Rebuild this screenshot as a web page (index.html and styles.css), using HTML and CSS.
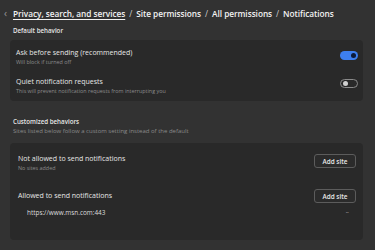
FILE: index.html
```html
<!DOCTYPE html>
<html>
<head>
<meta charset="utf-8">
<link rel="stylesheet" href="styles.css">
</head>
<body>
<div class="page">
  <div class="crumbs">
    <span class="back">‹</span>
    <span class="link">Privacy, search, and services</span>
    <span class="sep">/</span>
    <span>Site permissions</span>
    <span class="sep">/</span>
    <span>All permissions</span>
    <span class="sep">/</span>
    <span>Notifications</span>
  </div>

  <div class="section-title">Default behavior</div>
  <div class="card card-default">
    <div class="row">
      <div class="text">
        <div class="label">Ask before sending (recommended)</div>
        <div class="desc">Will block if turned off</div>
      </div>
      <span class="toggle on"><span class="knob"></span></span>
    </div>
    <div class="row">
      <div class="text">
        <div class="label">Quiet notification requests</div>
        <div class="desc">This will prevent notification requests from interrupting you</div>
      </div>
      <span class="toggle off"><span class="knob"></span></span>
    </div>
  </div>

  <div class="section-title custom">Customized behaviors</div>
  <div class="section-sub">Sites listed below follow a custom setting instead of the default</div>
  <div class="card card-custom">
    <div class="group">
      <div class="text">
        <div class="label">Not allowed to send notifications</div>
        <div class="desc">No sites added</div>
      </div>
      <button class="btn">Add site</button>
    </div>
    <div class="group second">
      <div class="text">
        <div class="label">Allowed to send notifications</div>
      </div>
      <button class="btn">Add site</button>
    </div>
    <div class="site">
      <span class="url">https://www.msn.com:443</span>
      <span class="more">···</span>
    </div>
  </div>
</div>
</body>
</html>
```

FILE: styles.css
```css
* { box-sizing: border-box; }
html, body { margin: 0; padding: 0; }
body {
  background: #323232;
  font-family: "Open Sans", "Noto Sans", sans-serif;
  color: #e8e8e8;
  width: 375px;
  height: 250px;
  overflow: hidden;
}
.page { padding: 3px 12px 0 10px; }

.crumbs {
  display: flex;
  align-items: center;
  gap: 3px;
  font-size: 8.3px;
  font-weight: 600;
  color: #f2f2f2;
  height: 20px;
  white-space: nowrap;
  letter-spacing: -0.05px;
}
.crumbs .back { color: #9a9a9a; font-weight: 400; font-size: 10px; margin-left: -6px; margin-right: 3px; }
.crumbs .link { text-decoration: underline; text-underline-offset: 2px; text-decoration-thickness: 1px; }
.crumbs .sep { color: #cfcfcf; font-weight: 400; margin: 0 1px; }

.section-title {
  font-size: 6.2px;
  font-weight: 600;
  color: #e6e6e6;
  margin: 3px 0 0 3px;
  height: 14px;
  line-height: 10px;
}
.section-title.custom { margin-top: 17px; height: 8px; line-height: 8px; }
.section-sub {
  font-size: 6px;
  color: #8a8a8a;
  margin: 0 0 0 3px;
  height: 10px;
  line-height: 10px;
}

.card {
  background: #292929;
  border-radius: 4px;
  width: 353px;
}
.card-default { padding: 5px 5px 5px 6px; height: 61px; }
.row {
  display: flex;
  align-items: flex-start;
  justify-content: space-between;
  height: 26px;
  padding-top: 3px;
}
.row + .row { margin-top: 3px; }
.label { font-size: 7px; color: #e6e6e6; line-height: 10px; }
.desc { font-size: 5.4px; color: #8c8c8c; line-height: 8px; }

.toggle {
  position: relative;
  width: 18px;
  height: 9px;
  border-radius: 5px;
  margin-top: 3px;
}
.toggle.on { background: #3d7fef; }
.toggle.off { border: 1px solid #8a8a8a; margin-top: 2px; }
.toggle .knob {
  position: absolute;
  width: 5px; height: 5px; border-radius: 50%;
  top: 2px;
}
.toggle.on .knob { right: 2px; background: #0b1a3a; }
.toggle.off .knob { left: 2px; top: 1px; background: #d0d0d0; }

.card-custom { margin-top: 7px; height: 97px; padding: 11px 7px 0 8px; }
.group { display: flex; justify-content: space-between; align-items: flex-start; }
.group .text { padding-top: 0; }
.group.second { margin-top: 17px; align-items: center; }
.btn {
  width: 42px;
  height: 14px;
  background: #2b2b2b;
  border: 1px solid #5c5c5c;
  border-radius: 3px;
  color: #e8e8e8;
  font-family: inherit;
  font-size: 6.4px;
  font-weight: 600;
  padding: 0;
}
.site {
  display: flex;
  justify-content: space-between;
  align-items: center;
  padding: 5px 8px 0 9px;
}
.url { font-size: 6.4px; color: #dcdcdc; }
.more { font-size: 7px; color: #9a9a9a; letter-spacing: -1px; }
```
